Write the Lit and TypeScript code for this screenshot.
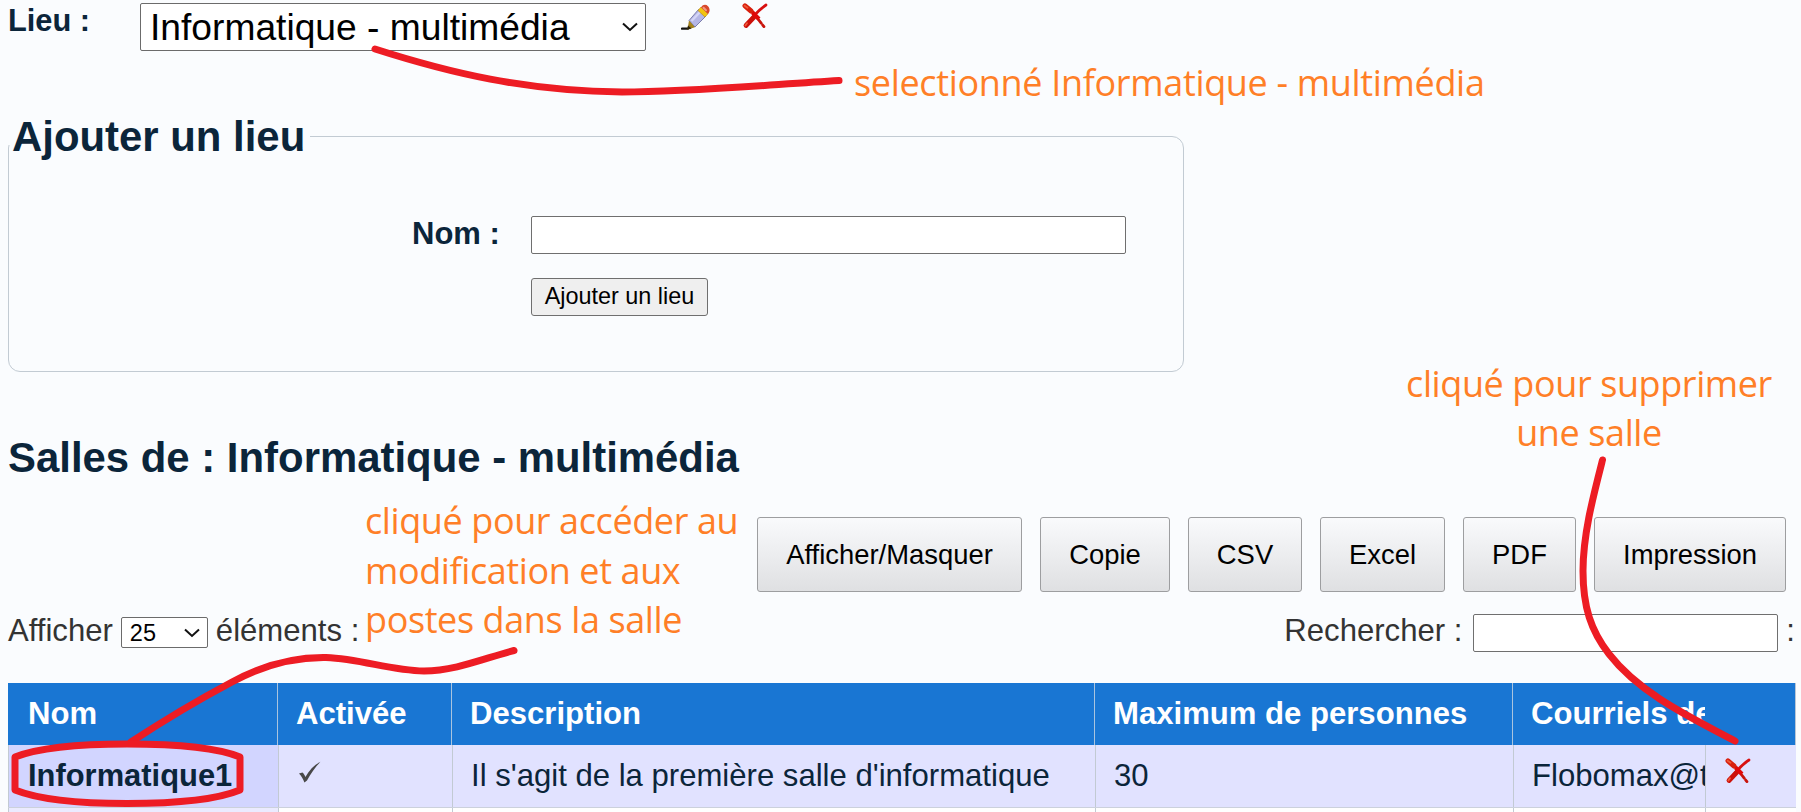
import { LitElement, html, css, svg } from "lit";
import { customElement } from "lit/decorators.js";

const cross = html`<svg class="ico" viewBox="0 0 26 26" width="26" height="26">
  <path d="M3 2.5C8 6 13 11 16 16L23 25" fill="none" stroke="#c8140c" stroke-width="2.8" stroke-linecap="round" stroke-dasharray="24 2.5 2 9"/>
  <path d="M3 2.8L9 8" stroke="#d8200e" stroke-width="5" stroke-linecap="round"/>
  <path d="M2.6 2.8L5.500 4.8" stroke="#ee5a38" stroke-width="1.8" stroke-linecap="round"/>
  <path d="M24 2C18 6 11 13 5 22" fill="none" stroke="#d81010" stroke-width="2.800" stroke-linecap="round"/>
  <path d="M12 14L4 22.5" stroke="#cc100a" stroke-width="4.8" stroke-linecap="round"/>
  <path d="M3.4 22.5L5 20.2" stroke="#ee5a38" stroke-width="1.8" stroke-linecap="round"/>
  <path d="M10.500 9.500L17 16" stroke="#e00808" stroke-width="4"/>
</svg>`;

const pencil = html`<svg class="ico" viewBox="0 0 30 27" width="30" height="27">
  <path d="M1 24.6H7L11 22.500" fill="none" stroke="#111" stroke-width="2.2" stroke-linecap="round"/>
  <path d="M8 16.500L14.500 23L6.5 25.5Z" fill="#9a7a1c"/>
  <path d="M7 21.500L10.500 24.5L6 25.6Z" fill="#2a2208"/>
  <path d="M8 16.500L17.500 5.5L25 12L14 23Z" fill="#b4b6e6" stroke="#7274a4" stroke-width=".9"/>
  <path d="M10.500 17L19 8" stroke="#d4d5f6" stroke-width="2.4"/>
  <path d="M8.200 16.8L8 20L11 23.500L13.500 23Z" fill="#a8861c"/>
  <path d="M17 6.5L20 3L27 9.8L24 13Z" fill="#f2c410" stroke="#b98a08" stroke-width=".6"/>
  <path d="M20 3.4C22 .3 25 .2 27 2.2S29.300 7.6 27 10Z" fill="#d8482c"/>
  <path d="M22.5 3.8L25 6.2" stroke="#f09a80" stroke-width="2" stroke-linecap="round"/>
</svg>`;

const tick = html`<svg class="ico" viewBox="0 0 24 24" width="24" height="24">
  <path d="M1 12.500L4.5 11.5C6 12.8 6.800 14.5 7.4 16C11 9.500 16 4 22.500 .8C17 6.500 12.500 13 9 19.500L6.400 21.500C5.200 18 3.500 15 1 12.500Z" fill="#484848"/>
</svg>`;

const chevron = svg`<path d="M1 1.500L8 8L15 1.500" fill="none" stroke="#111" stroke-width="2"/>`;

@customElement("app-root")
export class AppRoot extends LitElement {
  static styles = css`
    :host { display: block; position: relative; width: 1801px; height: 812px; overflow: hidden;
      background: #fafcfe; color: #0b253a; font: 31.100px/36px "Liberation Sans", Arial, sans-serif; }
    * { box-sizing: border-box; }
    svg { display: block; }
    h2 { margin: 0; font-size: 41.900px; line-height: 48px; font-weight: bold; white-space: nowrap; }
    .place { display: flex; height: 51px; padding: 3px 0 0 8px; }
    .place b { width: 132px; font-size: 30.800px; line-height: 36px; }
    .select { display: flex; align-items: center; justify-content: space-between; background: #fff;
      border: 1px solid #6b6b6b; border-radius: 2px; color: #000; }
    .big { width: 506px; height: 48px; padding: 0 7px 0 9px; font-size: 37.2px; }
    .edit { margin: 1px 0 0 35px; }
    .del { margin: 0 0 0 31px; }
    .legend { display: flow-root; position: relative; width: 302px; height: 25px; margin: 69px 0 0 8px; background: #fafcfe;
      padding-left: 4px; z-index: 1; }
    .legend span { display: block; margin-top: -7px; line-height: 48px; height: 24px; }
    .box { margin: -9px 0 0 8px; width: 1176px; height: 236px; border: 1px solid #c2cbd3;
      border-radius: 12px; padding: 79px 0 0 404px; }
    .field { display: flex; height: 38px; }
    .field b { width: 118px; margin-left: -1px; margin-right: 1px; font-size: 31px; line-height: 36px; }
    .input { background: #fff; border: 1px solid #6f6f6f; border-radius: 2px; }
    .wide { width: 595px; height: 38px; }
    .add { display: flex; justify-content: center; width: 177px; height: 38px; margin: 24px 0 0 118px;
      background: #efefef; border: 1px solid #6f6f6f; border-radius: 3px; color: #000; font-size: 23.400px; line-height: 35px; }
    .rooms { margin: 62px 0 0 8px; }
    .tools { display: flex; justify-content: flex-end; gap: 18px; padding-right: 15px; margin-top: 35px; }
    .tools div { height: 75px; border: 1px solid #9d9ea0; border-radius: 3px; color: #000; text-align: center;
      font-size: 27.4px; line-height: 73px; background: linear-gradient(#f9fafc, #dfe0e2); }
    .filter { display: flex; height: 39px; margin: 22px 6px 0 8px; color: #333; white-space: pre; }
    .filter .t { line-height: 34px; }
    .small { width: 87px; height: 31px; margin: 3px 8px 0; padding: 0 7px 0 8px; font-size: 23.500px; }
    .grow { flex: 1; }
    .search { width: 305px; height: 38px; margin: 0 8px 0 11px; }
    .grid { display: grid; margin: 30px 5px 0 8px; }
    .head { grid-template-columns: 270px 174px 643px 418px 283px; height: 62px; background: #1976d3;
      color: #fff; font-weight: bold; line-height: 61px; border-right: 1px solid #b9c6d6; }
    .head div { padding-left: 18px; border-right: 1px solid #a9c4df; white-space: nowrap; }
    .head div:first-child { padding-left: 20px; }
    .head div:last-child { border: 0; }
    .head span { display: block; overflow: hidden; width: 174px; }
    .row { grid-template-columns: 271px 174px 643px 418px 192px 90px; margin-top: 0; height: 63px; background: #e1e2ff;
      line-height: 61px; border-bottom: 1px solid #ccd1dc; }
    .row > div { padding-left: 19px; border-right: 1px solid #c2cad3; overflow: hidden; white-space: nowrap; }
    .row > div:nth-child(n + 3) { padding-left: 18px; }
    .row > div:first-child { border-left: 1px solid #c2cad3; background: #d2d5ff; font-weight: bold; font-size: 30.900px; }
    .row > div:last-child { border-right: 0; }
    .next { height: 5px; background: #fff; border-bottom: 0; }
    .next > div:first-child { background: #ebebff; }
    .tick { margin-top: 16px; }
    .x { margin: 13px 0 0 1px; }
    .ink { position: absolute; inset: 0; z-index: 2; }
    .ink path { fill: none; stroke: #ed1c24; stroke-width: 7; stroke-linecap: round; stroke-linejoin: round; }
    .note { position: absolute; z-index: 2; color: #ff7f27; font: 36px/49.500px "Open Sans", "Noto Sans", sans-serif;
      white-space: nowrap; letter-spacing: -.4px; }
    .n1 { left: 854px; top: 58px; letter-spacing: -.33px; }
    .n2 { left: 365px; top: 496px; }
    .n3 { left: 1406px; top: 359px; width: 366px; text-align: center; line-height: 49px; }
  `;

  render() {
    const buttons: [string, number][] = [["Afficher/Masquer", 265], ["Copie", 130], ["CSV", 114], ["Excel", 125], ["PDF", 113], ["Impression", 192]];
    return html`
      <div class="place">
        <b>Lieu :</b>
        <div class="select big"><span>Informatique - multimédia</span><svg width="16" height="10">${chevron}</svg></div>
        <div class="edit">${pencil}</div>
        <div class="del">${cross}</div>
      </div>
      <h2 class="legend"><span>Ajouter un lieu</span></h2>
      <div class="box">
        <div class="field"><b>Nom :</b><div class="input wide"></div></div>
        <div class="add">Ajouter un lieu</div>
      </div>
      <h2 class="rooms">Salles de : Informatique - multimédia</h2>
      <div class="tools">${buttons.map(([t, w]) => html`<div style="width:${w}px">${t}</div>`)}</div>
      <div class="filter">
        <span class="t">Afficher</span>
        <div class="select small"><span>25</span><svg width="16" height="10">${chevron}</svg></div>
        <span class="t">éléments :</span>
        <div class="grow"></div>
        <span class="t">Rechercher :</span><div class="input search"></div><span class="t">:</span>
      </div>
      <div class="grid head"><div>Nom</div><div>Activée</div><div>Description</div><div>Maximum de personnes</div><div><span>Courriels des</span></div></div>
      <div class="grid row">
        <div>Informatique1</div><div><div class="tick">${tick}</div></div><div>Il s'agit de la première salle d'informatique</div>
        <div>30</div><div>Flobomax@test</div><div><div class="x">${cross}</div></div>
      </div>
      <div class="grid row next"><div></div><div></div><div></div><div></div><div></div><div></div></div>
      <svg class="ink" width="1801" height="812" viewBox="0 0 1801 812">
        <path d="M375 49C450 73 525 91 622 92C690 92 765 85 839 80.500"/>
        <path d="M131 742C169 717 200 699 232 682C265 664 294 657 326 657.500C362 659 390 670.500 424 671C455 671 485 658 514 650.500"/>
        <path d="M15 757C38 748 80 744 127 744C174 744 218 748 240 757V790C216 800 174 803.500 127 803.500C80 803.500 40 800 15 790Z"/>
        <path d="M1602.500 460C1593 497 1583 535 1583 571C1583 607 1591 631 1609 654C1640 694 1692 718 1735 741"/>
      </svg>
      <div class="note n1">selectionné Informatique - multimédia</div>
      <div class="note n2">cliqué pour accéder au<br>modification et aux<br>postes dans la salle</div>
      <div class="note n3">cliqué pour supprimer<br>une salle</div>
    `;
  }
}
